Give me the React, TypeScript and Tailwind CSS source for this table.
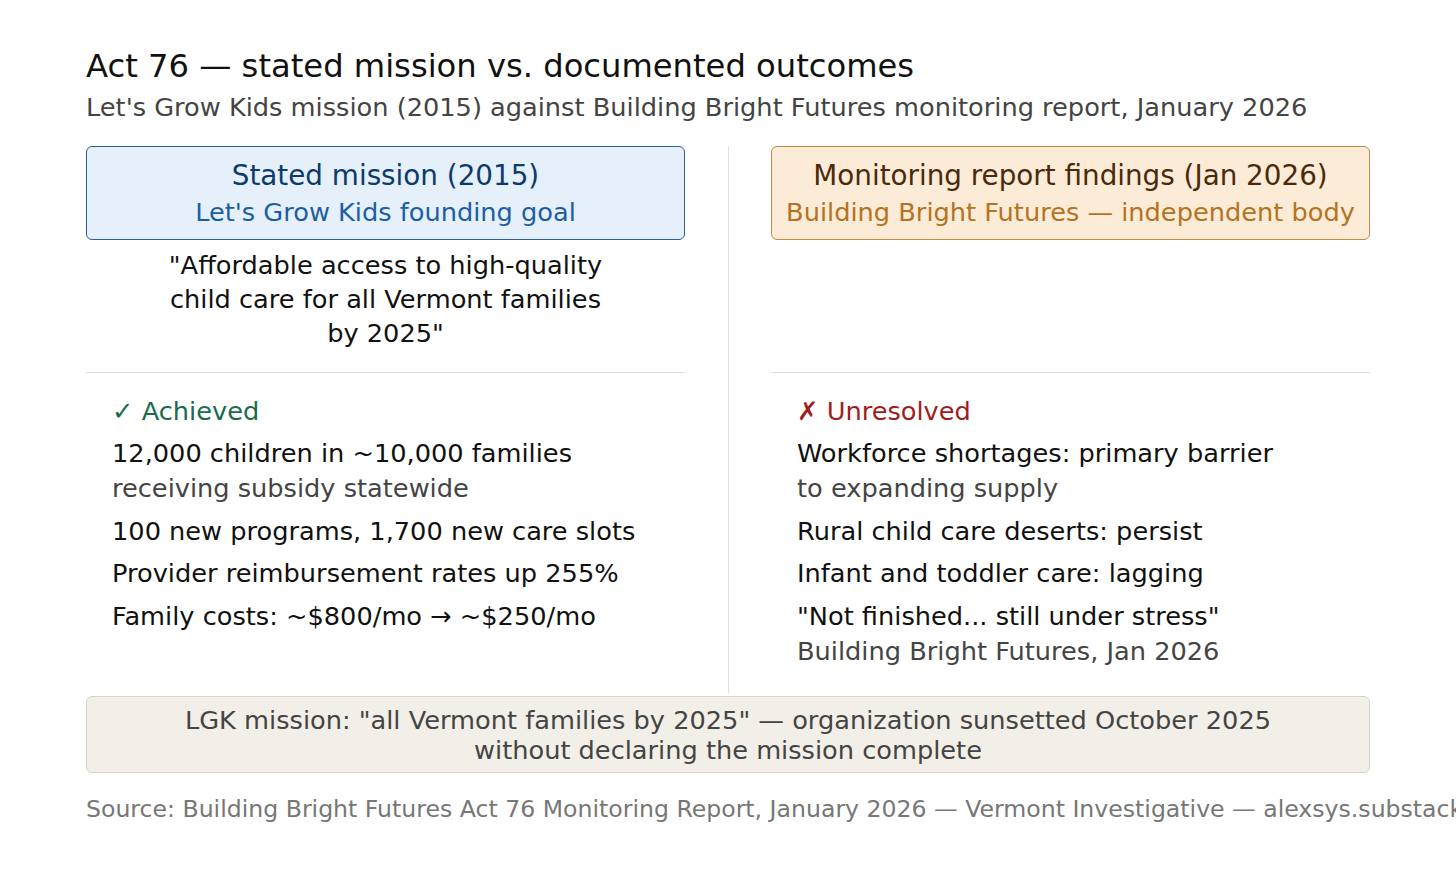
import React from "react";

type Item = { main: string; sub?: string };

const achieved: Item[] = [
  { main: "12,000 children in ~10,000 families", sub: "receiving subsidy statewide" },
  { main: "100 new programs, 1,700 new care slots" },
  { main: "Provider reimbursement rates up 255%" },
  { main: "Family costs: ~$800/mo → ~$250/mo" },
];

const unresolved: Item[] = [
  { main: "Workforce shortages: primary barrier", sub: "to expanding supply" },
  { main: "Rural child care deserts: persist" },
  { main: "Infant and toddler care: lagging" },
  { main: "\"Not finished... still under stress\"", sub: "Building Bright Futures, Jan 2026" },
];

function ItemList({ items }: { items: Item[] }) {
  return (
    <div className="flex flex-col gap-[8.5px] mt-[8px]">
      {items.map((it) => (
        <div key={it.main}>
          <div className="leading-[34px] text-[#111]">{it.main}</div>
          {it.sub && <div className="leading-[34px] mt-[1px] text-[#444]">{it.sub}</div>}
        </div>
      ))}
    </div>
  );
}

export default function App() {
  return (
    <div className="w-[1456px] h-[878px] overflow-hidden bg-white pl-[86px] pt-[46px] font-['DejaVu_Sans',sans-serif] text-[25.65px]">
      {/* Heading */}
      <h1 className="text-[32.2px] leading-[40px] text-[#111] whitespace-nowrap">
        Act 76 — stated mission vs. documented outcomes
      </h1>
      <p className="mt-[4px] leading-[34px] text-[#444] whitespace-nowrap">
        Let's Grow Kids mission (2015) against Building Bright Futures monitoring report, January 2026
      </p>

      {/* Two columns */}
      <div className="mt-[22px] w-[1284px] h-[547px] grid grid-cols-[599px_86px_599px]">
        {/* Left */}
        <div className="flex flex-col">
          <div className="h-[94px] rounded-[6px] border border-[#2c5d98] bg-[#e6f0fb] flex flex-col items-center justify-center gap-[1px] pt-[1px]">
            <div className="text-[27.8px] leading-[36px] text-[#0d3a6d]">Stated mission (2015)</div>
            <div className="leading-[34px] text-[#1b5ea6]">Let's Grow Kids founding goal</div>
          </div>
          <div className="h-[132px] pt-[8px] text-center leading-[34px] text-[#111]">
            "Affordable access to high-quality
            <br />
            child care for all Vermont families
            <br />
            by 2025"
          </div>
          <div className="border-t border-[#dddddd]" />
          <div className="pl-[26px] pt-[21px]">
            <div className="leading-[34px] text-[#1a6b4b]">✓ Achieved</div>
            <ItemList items={achieved} />
          </div>
        </div>

        {/* Divider */}
        <div className="flex justify-center">
          <div className="w-px h-full bg-[#e3dfd6]" />
        </div>

        {/* Right */}
        <div className="flex flex-col">
          <div className="h-[94px] rounded-[6px] border border-[#c38b3f] bg-[#fcecd7] flex flex-col items-center justify-center gap-[1px] pt-[1px]">
            <div className="text-[27.8px] leading-[36px] text-[#4b2a0b]">Monitoring report findings (Jan 2026)</div>
            <div className="leading-[34px] text-[#b47320]">Building Bright Futures — independent body</div>
          </div>
          <div className="h-[132px]" />
          <div className="border-t border-[#dddddd]" />
          <div className="pl-[26px] pt-[21px]">
            <div className="leading-[34px] text-[#a11d1d]">✗ Unresolved</div>
            <ItemList items={unresolved} />
          </div>
        </div>
      </div>

      {/* Summary */}
      <div className="mt-[3px] w-[1284px] h-[77px] rounded-[6px] border border-[#d8d4cb] bg-[#f2efe8] flex flex-col items-center justify-center text-center leading-[30px] text-[#444]">
        <div>LGK mission: "all Vermont families by 2025" — organization sunsetted October 2025</div>
        <div>without declaring the mission complete</div>
      </div>

      <div className="mt-[21px] leading-[30px] text-[23.6px] text-[#777] whitespace-nowrap">
        Source: Building Bright Futures Act 76 Monitoring Report, January 2026 — Vermont Investigative — alexsys.substack.com
      </div>
    </div>
  );
}
